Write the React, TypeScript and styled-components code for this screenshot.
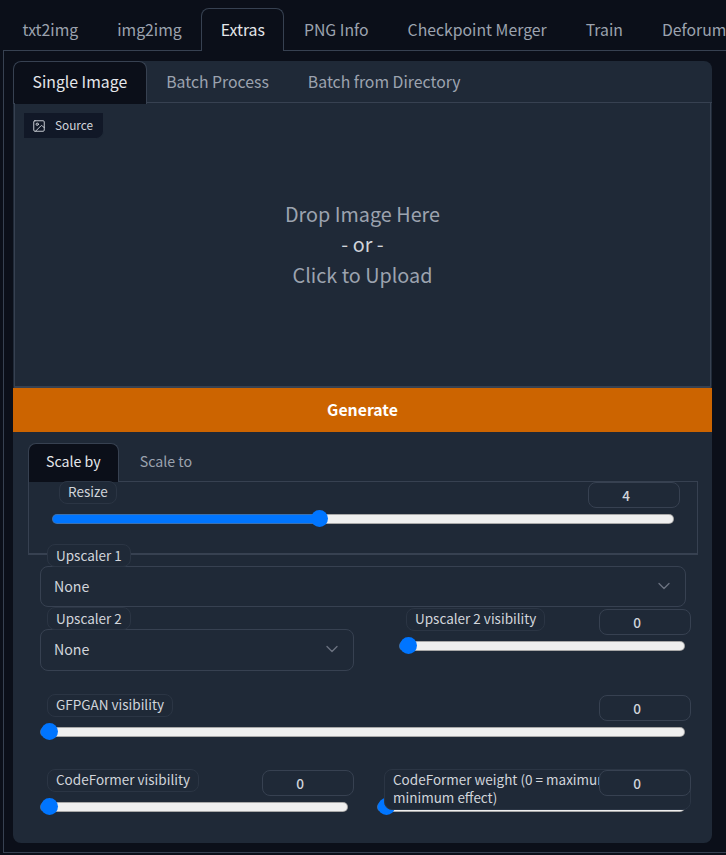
import React from 'react';
import styled, { createGlobalStyle } from 'styled-components';
import { ChevronDown, Image } from 'lucide-react';

const GlobalStyle = createGlobalStyle`
  html, body {
    margin: 0;
    padding: 0;
    height: 855px;
    overflow: hidden;
    background: #0b0f19;
    font-family: "Noto Sans CJK SC", "Noto Sans", sans-serif;
    color: #d1d5db;
  }
  * {
    box-sizing: border-box;
  }
`;

const Page = styled.div`
  width: 726px;
  height: 855px;
  overflow: hidden;
  background: #0b0f19;
`;

const TopTabs = styled.div`
  display: flex;
  height: 50px;
  padding: 8px 0 0 3px;
  white-space: nowrap;
`;

const TopTab = styled.div<{ $active?: boolean }>`
  position: relative;
  z-index: 1;
  flex: none;
  height: 43px;
  padding: 0 18.5px;
  line-height: 41px;
  font-size: 15.8px;
  color: ${(p) => (p.$active ? '#e5e7eb' : '#9ca3af')};
  background: ${(p) => (p.$active ? '#0b0f19' : 'transparent')};
  border: 1px solid ${(p) => (p.$active ? '#374151' : 'transparent')};
  border-bottom: none;
  border-radius: 8px 8px 0 0;
`;

const Frame = styled.div`
  margin-left: 3px;
  height: 803px;
  padding: 10px 14px 9px 9px;
  border: 1px solid #374151;
  border-right: none;
`;

const Panel = styled.div`
  height: 782px;
  background: #1f2937;
  border-radius: 8px;
  overflow: hidden;
`;

const SubTabs = styled.div`
  display: flex;
  height: 42px;
  border-bottom: 1px solid #374151;
`;

const SubTab = styled.div<{ $active?: boolean }>`
  flex: none;
  height: 43px;
  padding: 0 18.5px;
  line-height: 39px;
  font-size: 15.8px;
  color: ${(p) => (p.$active ? '#e5e7eb' : '#9ca3af')};
  background: ${(p) => (p.$active ? '#0b0f19' : 'transparent')};
  border: 1px solid ${(p) => (p.$active ? '#374151' : 'transparent')};
  border-bottom: none;
  border-radius: 8px 8px 0 0;
`;

const DropZone = styled.div`
  position: relative;
  display: flex;
  flex-direction: column;
  align-items: center;
  justify-content: center;
  height: 285px;
  margin: 0 1px;
  border: 1px solid #374151;
  border-top: none;
  border-bottom-width: 2px;
  font-size: 19.8px;
  line-height: 30.6px;
  color: #9ca3af;
`;

const DropOr = styled.div`
  color: #d1d5db;
`;

const SourceBadge = styled.div`
  position: absolute;
  left: 9px;
  top: 10px;
  display: flex;
  align-items: center;
  gap: 9px;
  width: 80px;
  height: 26px;
  padding-left: 8px;
  background: #111827;
  border-bottom: 1px solid #1f2937;
  border-right: 1px solid #1f2937;
  border-radius: 0 0 8px 0;
  font-size: 11.8px;
  color: #d1d5db;
`;

const GenerateButton = styled.button`
  display: block;
  width: 100%;
  height: 44px;
  padding: 0 0 2px;
  border: none;
  background: #cc6400;
  color: #fff;
  font-family: inherit;
  font-size: 15.8px;
  font-weight: 600;
`;

const Controls = styled.div`
  padding: 11px 26px 0 27px;
`;

const ScaleTabs = styled.div`
  display: flex;
  gap: 3px;
  height: 38px;
  margin-left: -12px;
`;

const ScaleTab = styled.div<{ $active?: boolean }>`
  flex: none;
  height: 39px;
  padding: 0 17px;
  line-height: 35px;
  font-size: 14.2px;
  color: ${(p) => (p.$active ? '#e5e7eb' : '#9ca3af')};
  background: ${(p) => (p.$active ? '#0b0f19' : 'transparent')};
  border: 1px solid ${(p) => (p.$active ? '#374151' : 'transparent')};
  border-bottom: none;
  border-radius: 8px 8px 0 0;
`;

const ScaleBox = styled.div`
  width: 670px;
  height: 74px;
  margin-left: -12px;
  padding: 0 23px;
  border: 1px solid #374151;
  border-width: 1px 1px 2px 1px;
`;

const FieldLabel = styled.span`
  display: inline-block;
  height: 23px;
  padding: 0 8px;
  line-height: 20px;
  font-size: 13.5px;
  color: #d1d5db;
  background: #1f2937;
  border: 1px solid #2b3544;
  border-radius: 8px;
  white-space: nowrap;
`;

const FloatingLabel = styled(FieldLabel)`
  position: absolute;
  left: 6px;
  top: -23px;
`;

const SelectField = styled.div<{ $width: number; $height: number }>`
  position: relative;
  display: flex;
  align-items: center;
  justify-content: space-between;
  width: ${(p) => p.$width}px;
  height: ${(p) => p.$height}px;
  padding: 0 11px 2px 13px;
  border: 1px solid #374151;
  border-radius: 8px;
  font-size: 14.2px;
  color: #d1d5db;
`;

const SliderWrap = styled.div<{ $width?: number }>`
  width: ${(p) => (p.$width ? `${p.$width}px` : '100%')};
`;

const SliderHead = styled.div`
  position: relative;
  display: flex;
  align-items: flex-start;
  justify-content: space-between;
  height: 28px;
  margin: 0 -6px 0 7px;
`;

const HeadLabel = styled(FieldLabel)`
  margin-top: -1px;
  line-height: 18px;
`;

const WrappedLabel = styled(FieldLabel)`
  position: absolute;
  left: 0;
  right: 0;
  top: -1px;
  z-index: 1;
  height: 41px;
  padding: 1px 0 0 8px;
  line-height: 17.5px;
  white-space: normal;
  overflow: hidden;
`;

const NumberBox = styled.div`
  position: relative;
  z-index: 2;
  flex: none;
  width: 92px;
  height: 26px;
  margin-left: auto;
  padding-right: 16px;
  line-height: 24px;
  text-align: center;
  font-size: 13.6px;
  font-weight: 500;
  color: #d1d5db;
  background: #1f2937;
  border: 1px solid #374151;
  border-radius: 8px;
`;

const Range = styled.input`
  display: block;
  width: 100%;
  height: 17px;
  margin: 0;
  appearance: none;
  background: transparent;

  &::-webkit-slider-runnable-track {
    height: 10px;
    border: 1px solid rgba(110, 110, 110, 0.55);
    border-radius: 5px;
    background-origin: border-box;
    background-clip: border-box;
    background-image: linear-gradient(to right, #0075ff var(--fill), #efefef var(--fill));
  }

  &::-webkit-slider-thumb {
    appearance: none;
    width: 17px;
    height: 17px;
    margin-top: -4.5px;
    border: none;
    border-radius: 50%;
    background: #0075ff;
  }
`;

const UpscalerOne = styled.div`
  margin-top: 11px;
`;

const UpscalerRow = styled.div`
  display: flex;
  justify-content: space-between;
  align-items: flex-start;
  margin-top: 22px;
  padding-right: 1px;
`;

const UpscalerVisibility = styled.div`
  width: 286px;
  margin-top: -20px;
`;

const GfpganRow = styled.div`
  margin-top: 24px;
  padding-right: 1px;
`;

const CodeFormerRow = styled.div`
  display: flex;
  justify-content: space-between;
  margin-top: 30px;
  padding-right: 1px;
`;

type SliderProps = {
  label: string;
  value: number;
  min?: number;
  max?: number;
  wrapped?: boolean;
  width?: number;
};

const Slider: React.FC<SliderProps> = ({ label, value, min = 0, max = 1, wrapped, width }) => {
  const ratio = (value - min) / (max - min);
  const fill = { '--fill': `calc(8.5px + (100% - 17px) * ${ratio})` } as React.CSSProperties;

  return (
    <SliderWrap $width={width}>
      <SliderHead>
        {wrapped ? <WrappedLabel>{label}</WrappedLabel> : <HeadLabel>{label}</HeadLabel>}
        <NumberBox>{value}</NumberBox>
      </SliderHead>
      <Range type="range" min={min} max={max} step={0.01} defaultValue={value} style={fill} />
    </SliderWrap>
  );
};

const App: React.FC = () => (
  <Page>
    <GlobalStyle />
    <TopTabs>
      <TopTab>txt2img</TopTab>
      <TopTab>img2img</TopTab>
      <TopTab $active>Extras</TopTab>
      <TopTab>PNG Info</TopTab>
      <TopTab>Checkpoint Merger</TopTab>
      <TopTab>Train</TopTab>
      <TopTab>Deforum</TopTab>
    </TopTabs>
    <Frame>
      <Panel>
        <SubTabs>
          <SubTab $active>Single Image</SubTab>
          <SubTab>Batch Process</SubTab>
          <SubTab>Batch from Directory</SubTab>
        </SubTabs>
        <DropZone>
          <SourceBadge>
            <Image size={14} strokeWidth={1.6} />
            Source
          </SourceBadge>
          <div>Drop Image Here</div>
          <DropOr>- or -</DropOr>
          <div>Click to Upload</div>
        </DropZone>
        <GenerateButton>Generate</GenerateButton>
        <Controls>
          <ScaleTabs>
            <ScaleTab $active>Scale by</ScaleTab>
            <ScaleTab>Scale to</ScaleTab>
          </ScaleTabs>
          <ScaleBox>
            <Slider label="Resize" value={4} min={1} max={8} />
          </ScaleBox>
          <UpscalerOne>
            <SelectField $width={646} $height={41}>
              <FloatingLabel>Upscaler 1</FloatingLabel>
              None
              <ChevronDown size={20} color="#6b7280" strokeWidth={1.6} />
            </SelectField>
          </UpscalerOne>
          <UpscalerRow>
            <SelectField $width={314} $height={42}>
              <FloatingLabel>Upscaler 2</FloatingLabel>
              None
              <ChevronDown size={20} color="#6b7280" strokeWidth={1.6} />
            </SelectField>
            <UpscalerVisibility>
              <Slider label="Upscaler 2 visibility" value={0} />
            </UpscalerVisibility>
          </UpscalerRow>
          <GfpganRow>
            <Slider label="GFPGAN visibility" value={0} />
          </GfpganRow>
          <CodeFormerRow>
            <Slider label="CodeFormer visibility" value={0} width={308} />
            <Slider wrapped label="CodeFormer weight (0 = maximum effect, 1 = minimum effect)" value={0} width={308} />
          </CodeFormerRow>
        </Controls>
      </Panel>
    </Frame>
  </Page>
);

export default App;
